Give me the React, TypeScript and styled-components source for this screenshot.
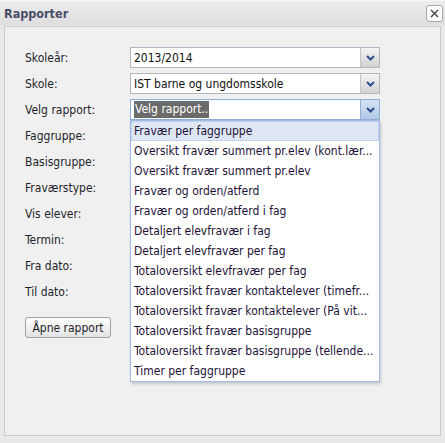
import React from 'react';
import styled, { createGlobalStyle, css } from 'styled-components';

const FONT = `"DejaVu Sans Condensed", "DejaVu Sans", Verdana, sans-serif`;

const GlobalStyle = createGlobalStyle`
  html, body {
    margin: 0;
    padding: 0;
    background: #e9e9e9;
  }
  body {
    font-family: ${FONT};
    font-stretch: condensed;
  }
`;

// the report list shows names cut to the width of the box, as in the original
const reportOptions = [
  'Fravær per faggruppe',
  'Oversikt fravær summert pr.elev (kont.lær...',
  'Oversikt fravær summert pr.elev',
  'Fravær og orden/atferd',
  'Fravær og orden/atferd i fag',
  'Detaljert elevfravær i fag',
  'Detaljert elevfravær per fag',
  'Totaloversikt elevfravær per fag',
  'Totaloversikt fravær kontaktelever (timefr...',
  'Totaloversikt fravær kontaktelever (På vit...',
  'Totaloversikt fravær basisgruppe',
  'Totaloversikt fravær basisgruppe (tellende...',
  'Timer per faggruppe',
];

const Window = styled.div`
  width: 445px;
  height: 443px;
  display: flex;
  flex-direction: column;
  box-sizing: border-box;
  border-top: 1px solid #f6f6f6;
  overflow: hidden;
`;

const TitleBar = styled.div`
  height: 24px;
  display: flex;
  align-items: center;
  justify-content: space-between;
  padding: 0 2px 0 4px;
  background: linear-gradient(#ececec, #dedede);
`;

const Title = styled.span`
  font-family: ${FONT};
  font-stretch: condensed;
  font-weight: bold;
  font-size: 12.5px;
  color: #4a4e68;
`;

const CloseButton = styled.div`
  width: 15px;
  height: 15px;
  border: 1px solid #a9a9a9;
  border-radius: 3px;
  background: #fafafa;
  display: flex;
  align-items: center;
  justify-content: center;
`;

const Panel = styled.div`
  margin: 1px 4px 0 4px;
  height: 410px;
  box-sizing: border-box;
  border: 1px solid #cacaca;
  background: #f0f0f0;
  padding: 20px 20px 0 20px;
`;

const Row = styled.div`
  display: flex;
  align-items: center;
  height: 21px;
  margin-bottom: 5px;
`;

const Label = styled.label`
  width: 105px;
  font-size: 12px;
  color: #1f1f2a;
`;

const SelectWrap = styled.div`
  position: relative;
  width: 250px;
`;

const SelectBox = styled.div<{ focused?: boolean }>`
  display: flex;
  height: 21px;
  box-sizing: border-box;
  border: 1px solid ${p => (p.focused ? '#8fb0d9' : '#b3b6bd')};
  background: #fff;
`;

const SelectValue = styled.div`
  flex: 1;
  display: flex;
  align-items: center;
  padding-left: 3px;
  font-size: 12px;
  color: #111;
  white-space: nowrap;
  overflow: hidden;
`;

const Highlight = styled.span`
  background: #6b6b6b;
  color: #fff;
  padding: 1px 1px 2px 1px;
`;

const ArrowButton = styled.div<{ focused?: boolean }>`
  width: 18px;
  border-left: 1px solid ${p => (p.focused ? '#8fb0d9' : '#c4c4c4')};
  display: flex;
  align-items: center;
  justify-content: center;
  ${p =>
    p.focused
      ? css`background: linear-gradient(#d5e2f3, #b3c9e6);`
      : css`background: linear-gradient(#f4f4f4, #d2d2d2);`}
`;

const DropList = styled.ul`
  position: absolute;
  top: 21px;
  left: 0;
  width: 250px;
  box-sizing: border-box;
  margin: 0;
  padding: 0;
  list-style: none;
  background: #fff;
  border: 1px solid #9fbbe6;
  box-shadow: 1px 2px 3px rgba(0, 0, 0, 0.18);
  z-index: 5;
`;

const DropItem = styled.li<{ active?: boolean }>`
  height: 20px;
  line-height: 20px;
  box-sizing: border-box;
  padding: 0 2px 0 3px;
  font-size: 12px;
  color: #1d1236;
  white-space: nowrap;
  overflow: hidden;
  text-overflow: clip;
  ${p =>
    p.active &&
    css`
      background: #dfe7f6;
      border: 1px dotted #a9bfe6;
      line-height: 18px;
      padding-left: 2px;
    `}
`;

const OpenButton = styled.button`
  margin-top: 10px;
  height: 21px;
  width: 86px;
  padding: 0;
  border: 1px solid #a3a3a3;
  border-radius: 3px;
  background: linear-gradient(#fdfdfd, #e3e3e3);
  font-family: ${FONT};
  font-stretch: condensed;
  font-size: 12px;
  color: #1f1f2a;
`;

const Chevron = ({ color = '#2b4e8c' }: { color?: string }) => (
  <svg width="9" height="6" viewBox="0 0 9 6">
    <polyline points="1,1 4.5,4.5 8,1" fill="none" stroke={color} strokeWidth="2" />
  </svg>
);

const CloseIcon = () => (
  <svg width="9" height="9" viewBox="0 0 9 9">
    <path d="M1 1 L8 8 M8 1 L1 8" stroke="#444" strokeWidth="1.4" />
  </svg>
);

const Select: React.FC<{ value: string; focused?: boolean; children?: React.ReactNode }> = ({
  value,
  focused,
  children,
}) => (
  <SelectWrap>
    <SelectBox focused={focused}>
      <SelectValue>{focused ? <Highlight>{value}</Highlight> : value}</SelectValue>
      <ArrowButton focused={focused}>
        <Chevron />
      </ArrowButton>
    </SelectBox>
    {children}
  </SelectWrap>
);

const plainLabels = ['Faggruppe:', 'Basisgruppe:', 'Fraværstype:', 'Vis elever:', 'Termin:', 'Fra dato:', 'Til dato:'];

export default function App() {
  return (
    <>
      <GlobalStyle />
      <Window>
        <TitleBar>
          <Title>Rapporter</Title>
          <CloseButton>
            <CloseIcon />
          </CloseButton>
        </TitleBar>
        <Panel>
          <Row>
            <Label>Skoleår:</Label>
            <Select value="2013/2014" />
          </Row>
          <Row>
            <Label>Skole:</Label>
            <Select value="IST barne og ungdomsskole" />
          </Row>
          <Row>
            <Label>Velg rapport:</Label>
            <Select value="Velg rapport.." focused>
              <DropList>
                {reportOptions.map((opt, i) => (
                  <DropItem key={opt} active={i === 0}>
                    {opt}
                  </DropItem>
                ))}
              </DropList>
            </Select>
          </Row>
          {plainLabels.map(l => (
            <Row key={l}>
              <Label>{l}</Label>
            </Row>
          ))}
          <OpenButton>Åpne rapport</OpenButton>
        </Panel>
      </Window>
    </>
  );
}
